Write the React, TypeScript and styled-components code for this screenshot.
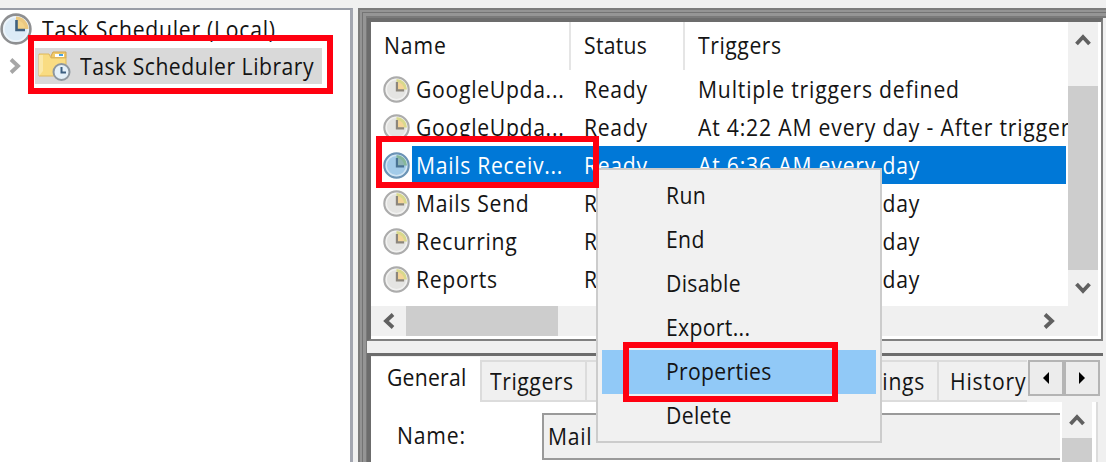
import React from "react";
import styled, { createGlobalStyle, css } from "styled-components";

const Global = createGlobalStyle`
  * { box-sizing: border-box; }
  body { margin: 0; background: #f0f0f0; overflow: hidden; }
  svg { flex: none; }
`;

const Window = styled.div`
  position: relative;
  width: 1106px;
  height: 462px;
  padding-top: 8px;
  overflow: hidden;
  display: flex;
  background: #f0f0f0;
  color: #141414;
  font-family: "Open Sans", "Noto Sans", sans-serif;
  font-size: 23px;
  line-height: 38px;
  white-space: nowrap;
`;

const Text = styled.span<{ $gap?: number }>`
  display: inline-block;
  letter-spacing: ${(p) => p.$gap ?? 0.76}px;
  transform: scaleX(0.92);
  transform-origin: left center;
`;

const TreePane = styled.aside`
  width: 353px;
  flex: none;
  background: #fff;
  border-top: 2px solid #989ca6;
  border-right: 3px solid #a3a6b0;
`;

const TreeRoot = styled.div`
  display: flex;
  align-items: center;
  gap: 10px;
  height: 38px;
`;

const TreeChild = styled.div`
  display: flex;
  align-items: center;
  height: 36px;
  padding-left: 6px;
`;

const TreeSelected = styled.div`
  display: flex;
  align-items: center;
  gap: 9px;
  width: 287px;
  height: 36px;
  margin-left: 11px;
  padding-left: 3px;
  background: #d9d9d9;
`;

const Frame = styled.main`
  flex: 1;
  margin-left: 5px;
  padding: 10px 0 0 9px;
  background: #f0f0f0;
  box-shadow: inset 2px 2px #7c7c7c, inset 4px 4px #949494, inset 5px 5px #747474,
    inset 8px 8px #959595, inset 9px 10px #7a7a7a;
  display: flex;
  flex-direction: column;
`;

const ListPane = styled.section`
  height: 323px;
  width: 736px;
  flex: none;
  border: solid;
  border-width: 4px 2px 2px 4px;
  border-color: #6c6c6c #808080 #808080 #6c6c6c;
  background: #fff;
  display: grid;
  grid-template-columns: 697px 30px;
  grid-template-rows: 284px 30px;
`;

const Table = styled.div`
  overflow: hidden;
  padding-right: 2px;
`;

const columns = css`
  display: grid;
  grid-template-columns: 200px 114px 1fr;
`;

const Header = styled.div`
  ${columns}
  height: 48px;
`;

const HeaderCell = styled.div`
  padding: 4px 0 0 13px;
  border-right: 2px solid #e5e5e5;
  &:last-child { border-right: 0; }
`;

const Row = styled.div<{ $selected?: boolean }>`
  ${columns}
  height: 38px;
  color: ${(p) => (p.$selected ? "#fff" : "#141414")};
  background: ${(p) =>
    p.$selected ? "linear-gradient(#0078d7, #0078d7) 41px 0 no-repeat" : "none"};
`;

const NameCell = styled.div`
  display: flex;
  align-items: center;
  min-width: 0;
  padding-left: 12px;
  gap: 6px;
`;

const Cell = styled.div`
  padding-left: 13px;
  min-width: 0;
`;

const VBar = styled.div`
  background: #f0f0f0;
  display: flex;
  flex-direction: column;
  align-items: center;
`;

const ArrowBox = styled.div<{ $w: number; $h: number }>`
  width: ${(p) => p.$w}px;
  height: ${(p) => p.$h}px;
  flex: none;
  display: flex;
  align-items: center;
  justify-content: center;
`;

const VThumb = styled.div<{ $offset?: number }>`
  flex: 1;
  width: 30px;
  margin-top: ${(p) => p.$offset ?? 0}px;
  background: #cdcdcd;
`;

const HBar = styled.div`
  grid-column: 1 / 3;
  background: #f0f0f0;
  display: flex;
`;

const HThumb = styled.div`
  width: 152px;
  background: #cdcdcd;
  margin-right: 476px;
`;

const Details = styled.section`
  margin-top: 12px;
  width: 736px;
  height: 109px;
  border-top: 3px solid #6c6c6c;
  border-left: 4px solid #6c6c6c;
  display: flex;
  flex-direction: column;
`;

const TabBar = styled.div`
  height: 46px;
  flex: none;
  display: flex;
  padding-top: 1px;
`;

const Tab = styled.div<{ $w: number; $active?: boolean; $pad?: number }>`
  width: ${(p) => p.$w}px;
  flex: none;
  margin-top: ${(p) => (p.$active ? 0 : 3)}px;
  padding-left: ${(p) => p.$pad ?? 8}px;
  padding-top: ${(p) => (p.$active ? 1 : 0)}px;
  background: ${(p) => (p.$active ? "#fff" : "#f0f0f0")};
  border: solid #dcdcdc;
  border-width: ${(p) => (p.$active ? 0 : "2px 0 2px 2px")};
  overflow: hidden;
`;

const CoveredTab = styled(Tab)`
  display: flex;
  justify-content: flex-end;
  padding-right: 5px;
`;

const Spin = styled.div`
  display: flex;
  margin: 3px 0 0 1px;
  height: 36px;
`;

const SpinButton = styled.div`
  width: 36px;
  border: 2px solid #b4b4b4;
  background: #ececec;
  display: flex;
  align-items: center;
  justify-content: center;
`;

const TabPage = styled.div`
  flex: 1;
  width: 727px;
  background: #fff;
  border-right: 2px solid #dcdcdc;
  display: flex;
`;

const FieldLabel = styled.div`
  width: 171px;
  padding: 14px 0 0 26px;
`;

const Field = styled.div`
  width: 518px;
  height: 47px;
  margin-top: 11px;
  padding: 2px 0 0 4px;
  border: 2px solid #9a9a9a;
  border-right: 0;
  background: #f0f0f0;
`;

const PageBar = styled.div`
  width: 30px;
  margin-left: 2px;
  background: #f0f0f0;
  display: flex;
  flex-direction: column;
`;

const Menu = styled.div`
  position: absolute;
  left: 596px;
  top: 168px;
  width: 286px;
  height: 275px;
  padding: 4px;
  border: 2px solid #cccccc;
  background: #f1f1f1;
`;

const MenuItem = styled.div<{ $active?: boolean }>`
  height: 44px;
  padding: 2px 0 0 64px;
  background: ${(p) => (p.$active ? "#91c9f7" : "transparent")};
`;

const Highlight = styled.div<{ $x: number; $y: number; $w: number; $h: number }>`
  position: absolute;
  left: ${(p) => p.$x}px;
  top: ${(p) => p.$y}px;
  width: ${(p) => p.$w}px;
  height: ${(p) => p.$h}px;
  border: 6px solid #ff0010;
`;

type Dir = "up" | "down" | "left" | "right";
const angles: Record<Dir, number> = { up: 0, right: 90, down: 180, left: 270 };

function Chevron({ dir, color = "#606060" }: { dir: Dir; color?: string }) {
  return (
    <svg width="18" height="18" viewBox="0 0 18 18">
      <path
        transform={`rotate(${angles[dir]} 9 9)`}
        d="M2.5 13 L9 6 L15.5 13"
        fill="none"
        stroke={color}
        strokeWidth="3.8"
      />
    </svg>
  );
}

function Clock({ size, tone }: { size: number; tone: "gray" | "blue" | "tree" }) {
  const c = {
    gray: { rim: "#acacac", face: "#e4e4e2", slice: "#f5d598", edge: "#d9d98c", hand: "#8c867c" },
    blue: { rim: "#6b93b5", face: "#a3cbe9", slice: "#8fb5b5", edge: "#86b79a", hand: "#4a7393" },
    tree: { rim: "#8e8f91", face: "#dcebf7", slice: "#f3d48b", edge: "#ecc980", hand: "#40617f" },
  }[tone];
  return (
    <svg width={size} height={size} viewBox="0 0 32 32">
      <circle cx="16" cy="16" r="14.4" fill={c.face} stroke={c.rim} strokeWidth="2.6" />
      <circle cx="16" cy="16" r="12.2" fill="none" stroke="#fff" strokeOpacity=".5" strokeWidth="1.8" />
      <path d="M16 16V3.5A12.5 12.5 0 0 1 28.5 16Z" fill={c.edge} />
      <path d="M16 16V7A9 9 0 0 1 25 16Z" fill={c.slice} />
      <path d="M16.5 7V17H25" fill="none" stroke={c.hand} strokeWidth="2.6" />
    </svg>
  );
}

function Folder() {
  return (
    <svg width="33" height="32" viewBox="0 0 33 32">
      <path d="M13 6L15 2H28V8H13Z" fill="#f2cb6a" stroke="#cfa550" />
      <path d="M17 4H26V7H17Z" fill="#fff" />
      <path d="M21 4H25V6H21Z" fill="#49a4df" />
      <path d="M1 4H11L13 8H28V26H1Z" fill="#f9dc82" stroke="#dfb95f" />
      <path d="M1 26L5 21V5H1Z" fill="#fae8a8" />
      <circle cx="23.5" cy="22" r="8" fill="#e4f0f8" stroke="#8d979f" strokeWidth="2" />
      <path d="M23.5 17V22.5H28" fill="none" stroke="#3c5f80" strokeWidth="2" />
    </svg>
  );
}

const tasks = [
  { name: "GoogleUpda...", trigger: "Multiple triggers defined" },
  { name: "GoogleUpda...", trigger: "At 4:22 AM every day - After trigger" },
  { name: "Mails Receiv...", trigger: "At 6:36 AM every day", selected: true },
  { name: "Mails Send", trigger: "At 6:36 AM every day" },
  { name: "Recurring", trigger: "At 6:36 AM every day" },
  { name: "Reports", trigger: "At 6:36 AM every day" },
];

const menuItems = ["Run", "End", "Disable", "Export...", "Properties", "Delete"];

export default function App() {
  return (
    <>
      <Global />
      <Window>
        <TreePane>
          <TreeRoot>
            <Clock size={32} tone="tree" />
            <Text $gap={0.8}>Task Scheduler (Local)</Text>
          </TreeRoot>
          <TreeChild>
            <Chevron dir="right" color="#a6a6a6" />
            <TreeSelected>
              <Folder />
              <Text $gap={0.55}>Task Scheduler Library</Text>
            </TreeSelected>
          </TreeChild>
        </TreePane>
        <Frame>
          <ListPane>
            <Table>
              <Header>
                <HeaderCell><Text $gap={1}>Name</Text></HeaderCell>
                <HeaderCell><Text $gap={0.3}>Status</Text></HeaderCell>
                <HeaderCell><Text $gap={0.6}>Triggers</Text></HeaderCell>
              </Header>
              {tasks.map((t, i) => (
                <Row key={i} $selected={t.selected}>
                  <NameCell>
                    <Clock size={27} tone={t.selected ? "blue" : "gray"} />
                    <Text>{t.name}</Text>
                  </NameCell>
                  <Cell><Text>Ready</Text></Cell>
                  <Cell><Text $gap={0.88}>{t.trigger}</Text></Cell>
                </Row>
              ))}
            </Table>
            <VBar>
              <ArrowBox $w={30} $h={36}><Chevron dir="up" /></ArrowBox>
              <VThumb $offset={28} />
              <ArrowBox $w={30} $h={36}><Chevron dir="down" /></ArrowBox>
            </VBar>
            <HBar>
              <ArrowBox $w={35} $h={30}><Chevron dir="left" /></ArrowBox>
              <HThumb />
              <ArrowBox $w={30} $h={30}><Chevron dir="right" /></ArrowBox>
            </HBar>
          </ListPane>
          <Details>
            <TabBar>
              <Tab $w={109} $active $pad={16}><Text $gap={0.25}>General</Text></Tab>
              <Tab $w={105}><Text $gap={0.6}>Triggers</Text></Tab>
              <CoveredTab $w={352}><Text>Settings</Text></CoveredTab>
              <Tab $w={90} $pad={11}><Text $gap={0.9}>History</Text></Tab>
              <Spin>
                <SpinButton>
                  <svg width="8" height="12" viewBox="0 0 8 12"><path d="M7 0V12L1 6Z" fill="#000" /></svg>
                </SpinButton>
                <SpinButton>
                  <svg width="8" height="12" viewBox="0 0 8 12"><path d="M1 0V12L7 6Z" fill="#000" /></svg>
                </SpinButton>
              </Spin>
            </TabBar>
            <TabPage>
              <FieldLabel><Text $gap={0.9}>Name:</Text></FieldLabel>
              <Field><Text>Mail</Text></Field>
              <PageBar>
                <ArrowBox $w={30} $h={36}><Chevron dir="up" /></ArrowBox>
                <VThumb />
              </PageBar>
            </TabPage>
          </Details>
        </Frame>
        <Menu>
          {menuItems.map((m) => (
            <MenuItem key={m} $active={m === "Properties"}><Text $gap={0.35}>{m}</Text></MenuItem>
          ))}
        </Menu>
        <Highlight $x={28} $y={35} $w={305} $h={59} />
        <Highlight $x={376} $y={136} $w={223} $h={52} />
        <Highlight $x={623} $y={342} $w={215} $h={60} />
      </Window>
    </>
  );
}
